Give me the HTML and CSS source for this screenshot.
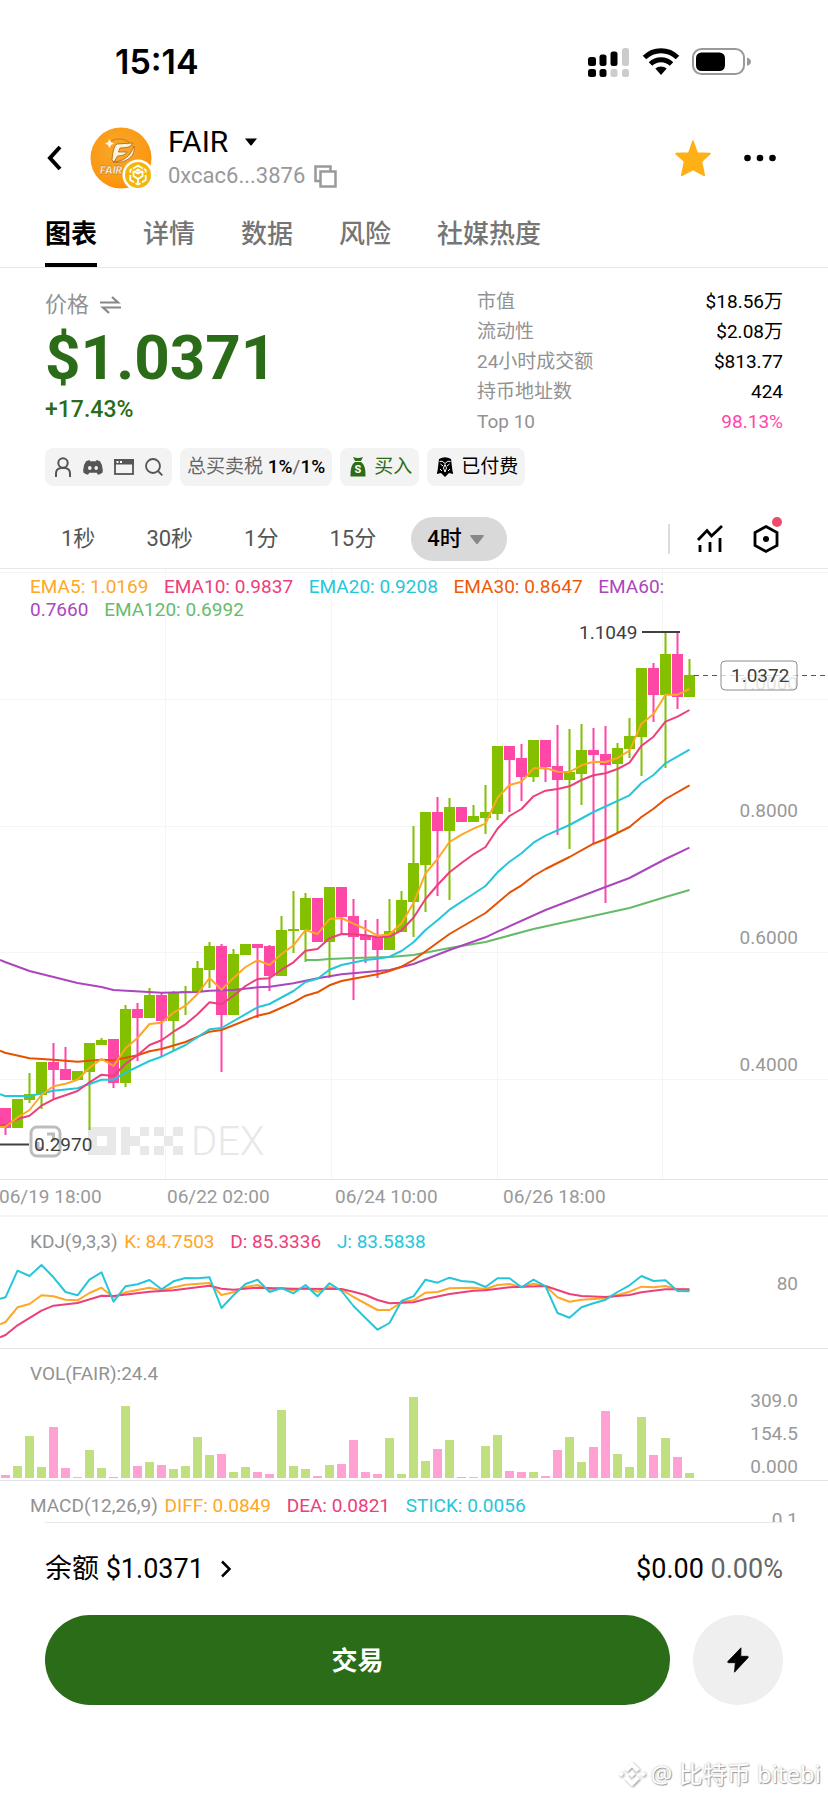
FILE: index.html
```html
<!DOCTYPE html>
<html lang="zh-CN">
<head>
<meta charset="utf-8">
<meta name="viewport" content="width=device-width, initial-scale=1">
<title>FAIR</title>
<link rel="stylesheet" href="styles.css">
</head>
<body>
<div class="screen">
  <div class="status">
    <time class="clock">15:14</time>
    <div class="status-icons">
      <svg width="42" height="30" viewBox="0 0 42 30" aria-hidden="true">
        <g fill="#000"><rect x="0" y="10" width="8" height="9" rx="2.500"/><rect x="11.500" y="7.500" width="7" height="11.500" rx="2.500"/><rect x="22.500" y="4.500" width="7" height="14.500" rx="2.500"/><rect x="0" y="22" width="8" height="8" rx="2.500"/><rect x="11.500" y="22" width="7" height="8" rx="2.500"/></g>
        <g fill="#ccc"><rect x="34" y="1" width="7" height="18" rx="2.500"/><rect x="22.500" y="22" width="7" height="8" rx="2.500"/><rect x="34" y="22" width="7" height="8" rx="2.500"/></g>
      </svg>
      <svg width="38" height="28" viewBox="0 0 38 28" aria-hidden="true">
        <path d="M2.500 9.500A23.500 23.500 0 0 1 35.500 9.500M8.500 16A15 15 0 0 1 29.500 16" fill="none" stroke="#000" stroke-width="5"/>
        <path d="M13.300 20.600A8.500 8.500 0 0 1 24.700 20.600L19 27Z"/>
      </svg>
      <svg width="60" height="28" viewBox="0 0 60 28" aria-hidden="true">
        <rect x="1" y="1" width="51" height="25" rx="8.500" fill="none" stroke="#999" stroke-width="2"/>
        <rect x="4" y="4.500" width="29" height="18.500" rx="5.500"/>
        <path d="M55 9.500q4 1.500 4 4.200t-4 4.200z" fill="#999"/>
      </svg>
    </div>
  </div>

  <header class="header">
    <button class="icon-btn back" aria-label="返回"><svg width="16" height="26" viewBox="0 0 16 26"><path d="M14 2 4 13 14 24" fill="none" stroke="#000" stroke-width="4"/></svg></button>
    <svg class="avatar" width="66" height="64" viewBox="0 0 66 64" role="img" aria-label="FAIR">
      <defs><radialGradient id="coin" cx="45%" cy="38%" r="62%"><stop offset="0" stop-color="#f6a92c"/><stop offset=".75" stop-color="#fb9a14"/><stop offset="1" stop-color="#ff8f08"/></radialGradient></defs>
      <circle cx="31" cy="32" r="30.500" fill="url(#coin)"/>
      <path d="M20 16A15 15 0 0 1 42 20" fill="none" stroke="#c8781a" stroke-width="1"/>
      <path d="M22 34Q23 20 27 18L43 17Q41 21 37 21.500L30 22 28.500 26H37Q35.500 29.500 27.500 30L24 36Z" fill="#fff3dc" stroke="#a8621a" stroke-width=".8"/>
      <path d="M44 20C46 29 37 38 23 36C33 36 41 30 44 20Z" fill="#fff3dc" stroke="#a8621a" stroke-width=".8"/>
      <path d="M19.500 13 21 16 24 17.500 21 19 19.500 22 18 19 15 17.500 18 16Z" fill="#fff8e8"/>
      <text x="10" y="47.500" font-family="Inter" font-size="10" font-weight="800" font-style="italic" fill="#fff3dc" stroke="#a8621a" stroke-width=".3">FAIR</text>
      <circle cx="48" cy="49" r="15.500" fill="#fff"/>
      <circle cx="48" cy="49" r="13" fill="#f2b70d"/>
      <g fill="none" stroke="#fff" stroke-width="1.800"><path d="M43 42.500 48 39.700 53 42.500M40.300 46.500V44L42 43M55.700 46.500V44L54 43M40.300 49V54L44 56.200M55.700 49V54L52 56.200M45.500 57.200 48 58.500 50.500 57.200"/><path d="M43.500 45 48 47.500 52.500 45M43.500 45V50L48 53V57M52.500 45V50L48 53"/></g>
      <path d="M48 42.500 51 44.200 48 46 45 44.200Z" fill="#fff"/>
    </svg>
    <div class="token">
      <button class="token-name">FAIR <svg width="12" height="8" viewBox="0 0 12 8" aria-hidden="true"><path d="M0 .5H12L6.800 7Q6 8 5.200 7Z"/></svg></button>
      <div class="address">0xcac6...3876
        <button class="icon-btn" aria-label="复制"><svg width="23" height="23" viewBox="0 0 23 23" fill="none" stroke="#999" stroke-width="2.500"><path d="M6 16H1.500V1.500H16.500V6"/><rect x="6.500" y="6.500" width="15" height="15"/></svg></button>
      </div>
    </div>
    <div class="header-actions">
      <button class="icon-btn" aria-label="收藏"><svg width="36" height="36" viewBox="0 0 36 36"><path d="M18 1 22.200 13 35 13.600 26.500 21.500 29.300 35.500 18 29.500 6.700 35.500 9.500 21.500 1 13.600 13.800 13Z" fill="#ffb017" stroke="#ffb017" stroke-width="1.500" stroke-linejoin="round"/></svg></button>
      <button class="icon-btn" aria-label="更多"><svg width="32" height="8" viewBox="0 0 32 8"><circle cx="3.500" cy="4" r="3.300"/><circle cx="16" cy="4" r="3.300"/><circle cx="28.500" cy="4" r="3.300"/></svg></button>
    </div>
  </header>

  <nav class="tabs">
    <a class="active" href="#chart" aria-current="page">图表</a>
    <a href="#details">详情</a>
    <a href="#data">数据</a>
    <a href="#risk">风险</a>
    <a href="#social">社媒热度</a>
  </nav>

  <section class="overview">
    <div class="price-block">
      <div class="price-label">价格
        <button class="icon-btn" aria-label="切换"><svg width="21" height="18" viewBox="0 0 21 18" fill="none" stroke="#888" stroke-width="2.200"><path d="M0 6.500H18L12 1M21 11.500H3L9 17"/></svg></button>
      </div>
      <div class="price">$1.0371</div>
      <div class="change">+17.43%</div>
    </div>
    <dl class="stats">
      <div><dt>市值</dt><dd>$18.56万</dd></div>
      <div><dt>流动性</dt><dd>$2.08万</dd></div>
      <div><dt>24小时成交额</dt><dd>$813.77</dd></div>
      <div><dt>持币地址数</dt><dd>424</dd></div>
      <div><dt>Top 10</dt><dd class="pink">98.13%</dd></div>
    </dl>
  </section>

  <div class="chips">
    <div class="chip chip-icons">
      <button class="icon-btn" aria-label="持有人"><svg width="18" height="20" viewBox="0 0 18 20" fill="none" stroke="#555" stroke-width="2"><circle cx="9" cy="6" r="4.700"/><path d="M2 20V16.500Q2 11.500 7 11H11Q16 11.500 16 16.500V20"/></svg></button>
      <button class="icon-btn" aria-label="Discord"><svg width="20" height="16" viewBox="0 0 20 16"><path d="M6.500 1 3 2.200Q-.5 7 .4 13.500 2.500 15.300 5 15.800L6.300 13.800H13.700L15 15.800Q17.500 15.300 19.600 13.500 20.500 7 17 2.200L13.500 1 12.800 2.300H7.200Z" fill="#555"/><ellipse cx="6.800" cy="9" rx="1.800" ry="2.100" fill="#f3f3f3"/><ellipse cx="13.200" cy="9" rx="1.800" ry="2.100" fill="#f3f3f3"/></svg></button>
      <button class="icon-btn" aria-label="网站"><svg width="20" height="16" viewBox="0 0 20 16"><rect x="1" y="1" width="18" height="14" fill="none" stroke="#555" stroke-width="1.800"/><path d="M0 0H20V5.500H0Z" fill="#555"/><path d="M2.500 2H4.500V4H2.500ZM6 2H8V4H6Z" fill="#fff"/></svg></button>
      <button class="icon-btn" aria-label="搜索"><svg width="18" height="18" viewBox="0 0 18 18" fill="none" stroke="#555" stroke-width="1.800"><circle cx="8" cy="8" r="7"/><path d="M13 13 17.300 17.300"/></svg></button>
    </div>
    <div class="chip"><span>总买卖税</span> <b>1%</b>/<b>1%</b></div>
    <button class="chip chip-buy">
      <svg width="16" height="20" viewBox="0 0 16 20" aria-hidden="true"><path d="M3 0Q8 2 13 0L11 4H5ZM5 5H11Q16 8 15.500 19.500H.5Q0 8 5 5Z" fill="#2a6c17"/><text x="8" y="16" text-anchor="middle" font-family="Roboto" font-weight="700" font-size="11" fill="#fff">S</text></svg>
      买入
    </button>
    <div class="chip chip-paid">
      <svg width="16" height="20" viewBox="1 0 16 20" aria-hidden="true"><path d="M3 2Q9-1.500 15 2L16.500 14 17.500 17 13 16 9 20 5 16 .5 17 1.500 14Z"/><path d="M3.500 4.500Q6 3 9 6.500 12 3 14.500 4.500M4.500 7 7 9M13.500 7 11 9M4 12 6 14M14 12 12 14M9 7.500 7.500 11 9 15 10.500 11Z" fill="none" stroke="#fff" stroke-width="1"/></svg>
      已付费
    </div>
  </div>

  <div class="periods">
    <button>1秒</button>
    <button>30秒</button>
    <button>1分</button>
    <button>15分</button>
    <label class="period-select"><select aria-label="周期"><option>4时</option></select><svg width="14" height="10" viewBox="0 0 14 10" aria-hidden="true"><path d="M1 0H13Q14.500 0 13.500 1.500L8 8.500Q7 10 6 8.500L.5 1.500Q-.5 0 1 0Z" fill="#888"/></svg></label>
    <div class="period-tools">
      <button class="icon-btn" aria-label="指标"><svg width="28" height="30" viewBox="0 0 28 30" fill="none" stroke="#000" stroke-width="2.800"><path d="M2 16 11 6.500 15.500 12 26 2"/><path d="M4 21V28M14 18V28M24 14V28"/></svg></button>
      <button class="icon-btn settings" aria-label="设置"><svg width="28" height="30" viewBox="0 0 28 30"><path d="M14 2.500 25 8.500V21.500L14 27.500 3 21.500V8.500Z" fill="none" stroke="#000" stroke-width="2.800"/><circle cx="14" cy="15" r="3"/></svg><i class="dot"></i></button>
    </div>
  </div>

  <section class="pane" id="chart">
    <svg class="plot" viewBox="0 569 828 648" role="img" aria-label="K线图">
      <path class="grid" d="M0 572.500H828M0 699.500H828M0 826.500H828M0 952.500H828M0 1079.500H828M165.500 569V1179M331.500 569V1179M497.500 569V1179M662.500 569V1179"/>
      <g class="brand">
        <path fill-rule="evenodd" d="M88 1127H116V1155H88ZM97 1136V1146H107V1136ZM121 1127H130V1155H121ZM130 1136H140V1146H130ZM140 1127H149V1136H140ZM140 1146H149V1155H140ZM154 1127H164V1136H154ZM154 1146H164V1155H154ZM164 1136H173V1146H164ZM173 1127H183V1136H173ZM173 1146H183V1155H173Z"/>
        <text x="191" y="1155">DEX</text>
      </g>
      <path class="wick up" d="M29.500 1073V1103M41.500 1062V1109M89.500 1043V1130M101.500 1038V1045M125.500 1005V1087M149.500 988V1018M173.500 991V1050M185.500 986V1015M197.500 961V992M209.500 942V988M233.500 949V1015M281.500 916V976M293.500 891V953M305.500 893V962M329.500 887V978M389.500 899V950M401.500 891V932M413.500 826V937M425.500 812V912M449.500 798V900M473.500 805V822M485.500 785V834M497.500 746V820M533.500 740V782M569.500 729V849M581.500 724V805M617.500 743V833M629.500 718V758M641.500 668V776M665.500 632V768M689.500 659V697"/>
      <path class="wick down" d="M5.500 1108V1135M53.500 1043V1099M65.500 1047V1080M113.500 1039V1088M137.500 1003V1061M161.500 993V1056M221.500 944V1072M257.500 944V1018M269.500 945V991M341.500 887V934M353.500 899V1000M365.500 920V963M377.500 919V978M437.500 797V896M509.500 746V812M521.500 744V801M545.500 740V782M557.500 725V835M593.500 728V844M605.500 726V903M653.500 663V722M677.500 632V709"/>
      <path class="body up" d="M17.500 1099V1128M29.500 1094V1100M41.500 1062V1095M77.500 1071V1080M89.500 1043V1072M101.500 1040V1045M125.500 1009V1083M149.500 995V1018M173.500 993V1021M185.500 991V992M197.500 968V992M209.500 946V970M233.500 954V1015M245.500 944V955M281.500 930V976M293.500 929V931M305.500 898V930M329.500 887V942M389.500 931V950M401.500 900V932M413.500 863V902M425.500 812V865M449.500 807V831M473.500 816V822M485.500 812V818M497.500 746V814M533.500 740V777M569.500 772V780M581.500 750V774M617.500 748V764M629.500 736V749M641.500 668V737M665.500 654V695M689.500 675V697"/>
      <path class="body down" d="M5.500 1108V1128M53.500 1062V1070M65.500 1069V1080M113.500 1039V1083M137.500 1009V1018M161.500 995V1021M221.500 946V1015M257.500 944V948M269.500 946V976M317.500 898V942M341.500 887V917M353.500 916V937M365.500 935V940M377.500 937V950M437.500 812V831M461.500 807V822M509.500 746V760M521.500 758V777M545.500 740V767M557.500 766V780M593.500 750V755M605.500 754V765M653.500 668V695M677.500 654V697"/>
      <polyline class="line green" points="305.500,960 317.500,960 329.500,959 353.500,958 389.500,957 413.500,955 449.500,948 485.500,942 533.500,929 629.500,908 665.500,897 689.500,890"/>
      <polyline class="line purple" points="0,960 5,962 29.500,971 77.500,983 101.500,987 113.500,990 161.500,992.700 197.500,992 209.500,990.700 233.500,990 257.500,987.300 269.500,986.700 293.500,983.300 317.500,978.300 341.500,974.300 389.500,970 413.500,964 449.500,950 485.500,937.300 497.500,931.700 545.500,910 605.500,887 629.500,878 665.500,859 689.500,847.700"/>
      <polyline class="line rust" points="0,1050.700 5,1052.700 29.500,1058.300 53.500,1059.700 77.500,1061.700 101.500,1059.700 113.500,1060.300 137.500,1055.300 149.500,1051.300 161.500,1049 185.500,1042 209.500,1031.700 221.500,1030 257.500,1015.700 269.500,1013 293.500,1002.300 305.500,995.700 317.500,992.300 329.500,985.300 341.500,981 377.500,974.300 389.500,971 401.500,966.700 413.500,960 449.500,934 485.500,913 509.500,892.700 521.500,885.300 533.500,876 545.500,869 569.500,857 593.500,843.700 605.500,839 629.500,827 641.500,817 653.500,808.700 665.500,799 689.500,785.300"/>
      <polyline class="line cyan" points="0,1094.300 5,1096 29.500,1096 53.500,1090.700 77.500,1088.300 101.500,1079.700 113.500,1079.700 125.500,1072.700 149.500,1061 161.500,1056.700 185.500,1045 209.500,1029.300 221.500,1028 257.500,1007.300 269.500,1004 293.500,991 305.500,982 317.500,978.700 329.500,969.700 341.500,965 365.500,960 377.500,958.700 389.500,956.700 401.500,951 413.500,942.300 425.500,930 437.500,920.300 449.500,909.700 485.500,886 497.500,872.300 509.500,861.700 521.500,853.300 533.500,842.700 545.500,835.700 569.500,825 593.500,812 629.500,795.300 641.500,783 653.500,775 665.500,763.300 689.500,749.700"/>
      <polyline class="line rose" points="0,1125 5,1125 17.500,1119 29.500,1115.700 41.500,1105.700 53.500,1099.300 65.500,1095.300 77.500,1091 89.500,1082.300 101.500,1074.700 113.500,1076 125.500,1063.700 137.500,1055.300 149.500,1045 161.500,1040.300 173.500,1031.700 185.500,1024.300 197.500,1014.300 209.500,1002.300 221.500,1004.300 233.500,995.700 245.500,986 257.500,979 269.500,978.300 281.500,969.700 293.500,962.300 305.500,950.700 317.500,949 329.500,938.300 341.500,934 353.500,934.300 365.500,935.300 377.500,937 389.500,936.700 401.500,930.300 413.500,917.700 425.500,899 437.500,885 449.500,872.300 461.500,863 473.500,854.300 485.500,847 497.500,828.700 509.500,816 521.500,809 533.500,796.300 545.500,790.700 557.500,789 569.500,786.300 581.500,780 593.500,775.300 605.500,773.300 617.500,769 629.500,762.700 641.500,745.700 653.500,736.700 665.500,721.700 677.500,716.700 689.500,710"/>
      <polyline class="line orange" points="0,1127 5,1127 17.500,1117.500 29.500,1110 41.500,1095 53.500,1086.300 65.500,1083.700 77.500,1079.700 89.500,1067.700 101.500,1059 113.500,1066 125.500,1048.300 137.500,1038 149.500,1024 161.500,1022.700 173.500,1012.700 185.500,1005.700 197.500,994 209.500,978 221.500,989.700 233.500,978 245.500,967 257.500,960.300 269.500,965 281.500,954 293.500,945.300 305.500,930 317.500,934 329.500,919 341.500,918 353.500,923.700 365.500,929 377.500,935.700 389.500,934.300 401.500,923.300 413.500,903 425.500,873.300 437.500,859 449.500,842 461.500,834.700 473.500,828.700 485.500,823.700 497.500,797.700 509.500,785 521.500,781.700 533.500,768.300 545.500,768 557.500,771.700 569.500,772 581.500,765.300 593.500,761.700 605.500,762 617.500,758 629.500,750.700 641.500,723.700 653.500,714 665.500,694.700 677.500,694.700 689.500,689"/>
      <path class="marker" d="M642 632H680M0 1144.500H29"/>
      <path class="last-price" d="M694 675.500H828"/>
      <g class="axis" text-anchor="end">
        <text x="798" y="690">1.0000</text><text x="798" y="817">0.8000</text><text x="798" y="944">0.6000</text><text x="798" y="1071">0.4000</text>
      </g>
      <rect class="price-tag" x="721" y="661" width="76" height="29" rx="4"/>
      <g class="note"><text x="731" y="682">1.0372</text><text x="579" y="639">1.1049</text></g>
      <g fill="none" stroke="#bdbdbd" stroke-width="3"><rect x="31" y="1127" width="29" height="29" rx="6"/><path d="M47 1134H53.500V1141M38 1142V1148.500H44"/></g>
      <text class="note" x="34" y="1151">0.2970</text>
      <path class="rule" d="M0 1179.500H828"/>
      <g class="axis"><text x="-1" y="1203">06/19 18:00</text><text x="167" y="1203">06/22 02:00</text><text x="335" y="1203">06/24 10:00</text><text x="503" y="1203">06/26 18:00</text></g>
      <path class="soft-rule" d="M0 1216H828"/>
    </svg>
    <p class="legend"><span class="c-orange">EMA5: 1.0169</span> <span class="c-rose">EMA10: 0.9837</span> <span class="c-cyan">EMA20: 0.9208</span> <span class="c-rust">EMA30: 0.8647</span> <span class="c-purple">EMA60: 0.7660</span> <span class="c-green">EMA120: 0.6992</span></p>
  </section>

  <section class="pane">
    <svg class="plot" viewBox="0 1217 828 132" role="img" aria-label="KDJ">
      <polyline class="line orange" points="0,1324.300 5.500,1322 17.500,1307.300 29.500,1304 41.500,1295.300 53.500,1296.300 65.500,1299.700 77.500,1300.300 89.500,1293 101.500,1287.700 113.500,1297.300 125.500,1292.300 149.500,1287.700 161.500,1290.300 185.500,1284.700 209.500,1283 221.500,1295 233.500,1292.300 245.500,1287 257.500,1285 269.500,1290 281.500,1288 293.500,1290.300 305.500,1287.700 317.500,1291.700 329.500,1287 341.500,1289.700 353.500,1297 377.500,1310 389.500,1310 401.500,1302.300 413.500,1300.300 425.500,1292.700 437.500,1292 449.500,1288.300 473.500,1287.700 485.500,1289 497.500,1285 509.500,1284 521.500,1287 533.500,1283.700 545.500,1286 557.500,1297.300 569.500,1301.700 581.500,1299.700 605.500,1298.300 629.500,1291.700 641.500,1286.700 653.500,1287.300 665.500,1286 677.500,1289.300 689.500,1290"/>
      <polyline class="line rose" points="0,1337.300 5.500,1335 17.500,1325.300 41.500,1310.700 53.500,1305.700 77.500,1303 101.500,1295.700 113.500,1296 149.500,1291.700 173.500,1290.300 209.500,1285.700 221.500,1288.700 233.500,1289.700 257.500,1287.700 293.500,1288.700 341.500,1289 353.500,1291.700 365.500,1295 377.500,1300 389.500,1303.300 413.500,1302.300 425.500,1299 449.500,1294 473.500,1290.700 485.500,1290.300 509.500,1287.300 545.500,1286 557.500,1290 569.500,1294 581.500,1296 605.500,1297 629.500,1295 641.500,1292.300 665.500,1289.300 689.500,1289.300"/>
      <polyline class="line cyan" points="0,1298.700 5.500,1297.300 17.500,1270.700 29.500,1276 41.500,1265 53.500,1277.300 65.500,1292 77.500,1295.300 89.500,1279.700 101.500,1272.300 113.500,1301.700 125.500,1286.300 137.500,1284.300 149.500,1280 161.500,1289.300 173.500,1281.300 185.500,1278 197.500,1278.300 209.500,1277.300 221.500,1308 233.500,1295.300 245.500,1284 257.500,1279.700 269.500,1292 281.500,1288 293.500,1293.300 305.500,1285 317.500,1296.300 329.500,1283.300 341.500,1291 353.500,1306 365.500,1318 377.500,1329.700 389.500,1323 401.500,1301 413.500,1296.300 425.500,1279.700 437.500,1282.700 449.500,1277.700 461.500,1281 473.500,1282 485.500,1287 497.500,1278.300 509.500,1278.300 521.500,1287.300 533.500,1279.700 545.500,1286.300 557.500,1313 569.500,1317.700 581.500,1307.300 593.500,1303.300 605.500,1299.700 617.500,1292 629.500,1285.300 641.500,1276 653.500,1281 665.500,1280.300 677.500,1291 689.500,1291.300"/>
      <text class="axis" x="798" y="1290" text-anchor="end">80</text>
      <path class="rule" d="M0 1348.500H828"/>
    </svg>
    <p class="legend"><b>KDJ(9,3,3)</b> <span class="c-orange">K: 84.7503</span> <span class="c-rose">D: 85.3336</span> <span class="c-cyan">J: 83.5838</span></p>
  </section>

  <section class="pane">
    <svg class="plot" viewBox="0 1349 828 132" role="img" aria-label="VOL">
      <path class="bar up" d="M17.500 1478V1466M29.500 1478V1436M41.500 1478V1467M77.500 1478V1477M89.500 1478V1450M101.500 1478V1468M125.500 1478V1406M149.500 1478V1462M173.500 1478V1469M185.500 1478V1466M197.500 1478V1437M209.500 1478V1455M233.500 1478V1472M245.500 1478V1467M281.500 1478V1410M293.500 1478V1466M305.500 1478V1469M329.500 1478V1465M389.500 1478V1438M401.500 1478V1474M413.500 1478V1397M425.500 1478V1461M449.500 1478V1440M473.500 1478V1477M485.500 1478V1446M497.500 1478V1435M533.500 1478V1472M569.500 1478V1437M581.500 1478V1462M617.500 1478V1454M629.500 1478V1467M641.500 1478V1417M665.500 1478V1438M689.500 1478V1473"/>
      <path class="bar down" d="M5.500 1478V1475M53.500 1478V1427M65.500 1478V1468M113.500 1478V1477M137.500 1478V1466M161.500 1478V1465M221.500 1478V1454M257.500 1478V1472M269.500 1478V1474M317.500 1478V1476M341.500 1478V1464M353.500 1478V1440M365.500 1478V1472M377.500 1478V1474M437.500 1478V1449M461.500 1478V1477M509.500 1478V1471M521.500 1478V1472M545.500 1478V1476M557.500 1478V1450M593.500 1478V1447M605.500 1478V1411M653.500 1478V1455M677.500 1478V1457"/>
      <g class="axis" text-anchor="end"><text x="798" y="1407">309.0</text><text x="798" y="1440">154.5</text><text x="798" y="1473">0.000</text></g>
      <path class="rule" d="M0 1480.500H828"/>
    </svg>
    <p class="legend">VOL(FAIR):24.4</p>
  </section>

  <section class="pane">
    <svg class="plot" viewBox="0 1481 828 41" role="img" aria-label="MACD">
      <text class="axis" x="798" y="1526" text-anchor="end">0.1</text>
    </svg>
    <p class="legend"><b>MACD(12,26,9)</b> <span class="c-orange">DIFF: 0.0849</span> <span class="c-rose">DEA: 0.0821</span> <span class="c-cyan">STICK: 0.0056</span></p>
  </section>

  <footer class="trade">
    <div class="balance">
      <a href="#balance">余额 $1.0371 <svg width="12" height="18" viewBox="0 0 12 18" aria-hidden="true"><path d="M2 1.500 9.500 9 2 16.500" fill="none" stroke="#000" stroke-width="2.500"/></svg></a>
      <div>$0.00 <span>0.00%</span></div>
    </div>
    <div class="trade-actions">
      <button class="trade-btn">交易</button>
      <button class="flash-btn" aria-label="闪兑"><svg width="22" height="26" viewBox="0 0 22 26"><path d="M14 .8 .8 14.500Q.3 15.500 1.500 15.700H8.300L7.500 25.200 21 10.700Q21.800 9.500 20.500 9.300H13.800Z" stroke="#000" stroke-width=".8" stroke-linejoin="round"/></svg></button>
    </div>
  </footer>

  <div class="credit">
    <svg width="30" height="30" viewBox="0 0 30 30" aria-hidden="true"><path d="M7 10.500 15 2.500 23 10.500 19.500 13 15 8.500 10.500 13ZM7 19.500 15 27.500 23 19.500 19.500 17 15 21.500 10.500 17ZM1 15 4 12 7 15 4 18ZM23 15 26 12 29 15 26 18ZM11.500 15 15 11.500 18.500 15 15 18.500Z" fill="#fff"/></svg>
    @ 比特币 bitebi
  </div>
</div>
</body>
</html>
```
FILE: styles.css
```css
* { box-sizing: border-box; }
body {
  margin: 0;
  background: #fff;
  color: #000;
  font-family: Roboto, "Noto Sans CJK SC", sans-serif;
}
button, select { font: inherit; color: inherit; background: none; border: 0; margin: 0; padding: 0; }
a { color: inherit; text-decoration: none; }
p, dl, dd { margin: 0; }
svg { display: block; flex: none; }
.screen { min-height: 100vh; display: flex; flex-direction: column; }
.icon-btn { display: inline-flex; }

.status { display: flex; align-items: center; justify-content: space-between; height: 124px; padding: 0 76px 0 115px; }
.clock { font: 600 34px/40px Inter, sans-serif; }
.status-icons { display: flex; align-items: center; gap: 12px; }

.header { display: flex; align-items: center; height: 68px; padding: 0 52px 0 46px; }
.avatar { margin-left: 28px; }
.token { margin-left: 12px; }
.token-name { display: flex; align-items: center; gap: 17px; font-size: 30px; line-height: 36px; }
.address { display: flex; align-items: center; gap: 9px; font-size: 22px; line-height: 32px; color: #999; }
.header-actions { display: flex; align-items: center; gap: 33px; margin-left: auto; }

.tabs { display: flex; gap: 46px; padding: 0 45px; border-bottom: 1px solid #e8e8e8; font-size: 26px; line-height: 42px; font-weight: 500; color: #757575; }
.tabs a { padding: 21px 0 8px; border-bottom: 4px solid transparent; }
.tabs .active { color: #000; font-weight: 700; border-color: #000; }

.overview { display: flex; justify-content: space-between; padding: 19px 45px 0; }
.price-block { padding-top: 3px; color: #2a6c17; }
.price-label { display: flex; align-items: center; gap: 11px; font-size: 22px; line-height: 30px; color: #929292; }
.price { font-size: 62px; line-height: 76px; font-weight: 700; }
.change { font-size: 23px; line-height: 28px; font-weight: 500; }
.stats { width: 306px; font-size: 19px; line-height: 30px; }
.stats div { display: flex; justify-content: space-between; }
.stats dt { color: #929292; }
.stats .pink { color: #ff47a8; }

.chips { display: flex; gap: 8px; padding: 11px 45px 0; font-size: 19px; line-height: 38px; color: #666; white-space: nowrap; }
.chip { height: 38px; padding: 0 7px; border-radius: 8px; background: #f3f3f3; }
.chip b { color: #000; font-weight: 500; }
.chip-icons { display: flex; align-items: center; gap: 11px; padding: 0 9px; }
.chip-buy, .chip-paid { display: flex; align-items: center; gap: 8px; padding: 0 7px 0 10px; }
.chip-buy { color: #2a6c17; }
.chip-paid { color: #000; }

.periods { display: flex; align-items: center; gap: 19px; padding: 31px 48px 7px 45px; border-bottom: 1px solid #e8e8e8; font-size: 22px; line-height: 44px; color: #555; }
.periods > button { padding: 0 16px; }
.period-select { position: relative; color: #000; font-weight: 500; }
.period-select select { display: block; appearance: none; height: 44px; width: 96px; padding: 0 16px; border-radius: 22px; background: #d9d9d9; }
.period-select svg { position: absolute; right: 23px; top: 18px; pointer-events: none; }
.period-tools { display: flex; gap: 28px; margin-left: auto; padding-left: 26px; border-left: 2px solid #dcdcdc; }
.settings { position: relative; }
.dot { position: absolute; right: -2px; top: -7px; width: 10px; height: 10px; border-radius: 50%; background: #ec4b6c; }

.pane { position: relative; font-size: 19px; }
.plot { width: 100%; height: auto; }
.plot text { font-size: 19px; }
.legend { position: absolute; left: 30px; right: 120px; top: 13px; line-height: 23px; color: #929292; }
#chart .legend { top: 6px; }
.legend b { margin-right: 2px; font-weight: 400; }
.legend span { margin-right: 11px; }
.c-orange { color: #ffa726; }
.c-rose { color: #ec407a; }
.c-cyan { color: #26c6da; }
.c-rust { color: #ee5a0a; }
.c-purple { color: #ab47bc; }
.c-green { color: #66bb6a; }
.grid { stroke: #f5f5f5; stroke-width: 1; }
.rule { stroke: #e4e4e4; }
.soft-rule { stroke: #f5f5f5; stroke-width: 2; }
.brand { fill: #e8e8e8; }
.plot .brand text { font-size: 40px; font-weight: 300; }
.wick { stroke-width: 2; }
.body { stroke-width: 11; }
.bar { stroke-width: 9; opacity: .5; }
.up { stroke: #82c000; }
.down { stroke: #ff47a8; }
.line { fill: none; stroke-width: 2; stroke-linejoin: round; }
.orange { stroke: #ffa726; }
.rose { stroke: #ec407a; }
.cyan { stroke: #26c6da; }
.rust { stroke: #e65100; }
.purple { stroke: #ab47bc; }
.green { stroke: #66bb6a; }
.marker { stroke: #404040; stroke-width: 2; }
.last-price { stroke: #555; stroke-dasharray: 5 4; }
.axis { fill: #999; }
.note { fill: #404040; }
.price-tag { fill: #fff; fill-opacity: .75; stroke: #8c8c8c; }

.trade { margin: 0 45px; border-top: 1px solid #e8e8e8; padding-top: 26px; }
.balance { display: flex; justify-content: space-between; font-size: 27px; line-height: 40px; }
.balance a { display: flex; align-items: center; gap: 16px; }
.balance span { color: #666; }
.trade-actions { display: flex; gap: 23px; padding-top: 26px; }
.trade-btn { flex: 1; height: 90px; padding-bottom: 3px; border-radius: 45px; background: #2a6c17; color: #fff; font-size: 26px; font-weight: 700; }
.flash-btn { width: 90px; height: 90px; border-radius: 50%; background: #efefef; display: flex; align-items: center; justify-content: center; }

.credit { display: flex; align-items: center; justify-content: flex-end; gap: 4px; margin-top: auto; padding: 0 7px 9px; font-family: "Noto Sans", "Noto Sans CJK SC", sans-serif; font-size: 24px; line-height: 34px; color: #fff; text-shadow: 1px 1px 1px #999, 0 0 2px #aaa; }
.credit svg { filter: drop-shadow(1px 1px 1px #999); }
```
